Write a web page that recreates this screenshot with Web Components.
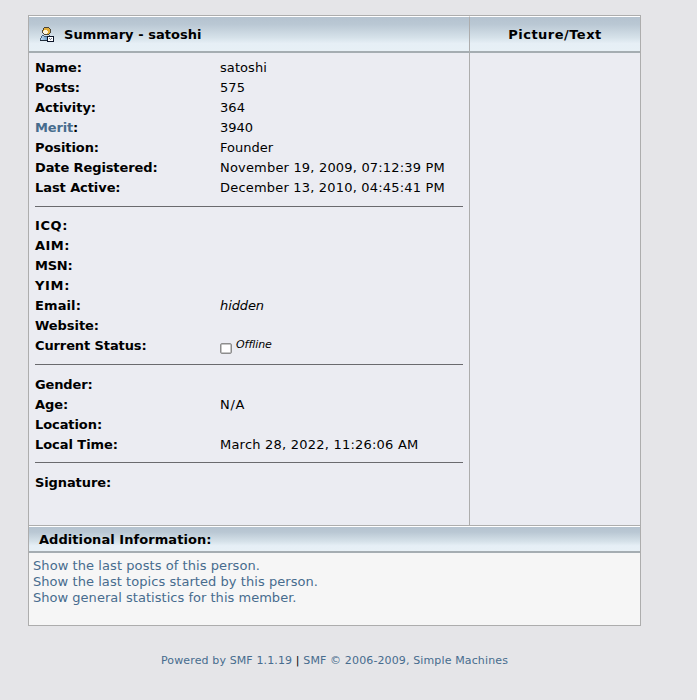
<!DOCTYPE html>
<html lang="en"><head><meta charset="utf-8"><title>Summary - satoshi</title>
<style>
body{margin:0;background:#e5e5e8;color:#000;font:13px/16px Verdana,"DejaVu Sans",sans-serif}
</style></head><body>
<profile-page></profile-page>
<script>
const define=(name,html,init)=>customElements.define(name,class extends HTMLElement{
  connectedCallback(){
    if(this.shadowRoot)return;
    const t=document.createElement('template');
    t.innerHTML=html;
    this.attachShadow({mode:'open'}).append(t.content.cloneNode(true));
    if(init)init(this,this.shadowRoot);
  }
});
// Spreads a run of text over the width given in pixels.
define('fit-text','<style>:host{display:inline-block;white-space:nowrap}</style><slot></slot>',el=>{
  const w=+el.getAttribute('w');
  if(!w)return;
  const n=el.textContent.length;
  el.style.letterSpacing=((w-el.getBoundingClientRect().width)/n)+'px';
});
define('member-icon',`<style>:host{display:block;width:16px;height:16px}svg{display:block}</style>
<svg width="16" height="16" viewBox="0 0 16 16" shape-rendering="crispEdges">
<defs><linearGradient id="b" x2="1"><stop stop-color="#c3dcf0"/><stop offset="1" stop-color="#5f93c4"/></linearGradient></defs>
<path fill="#4a4436" d="M4 0h5v1h1v1h1v4h-1v1h-1v1h-5v-1h-1v-1h-1v-3h1v-2h1z"/>
<path fill="#e3ae38" d="M4 1h5v1h1v4h-1v1h-5v-1h-1v-3h1z"/>
<path fill="#fdf3da" d="M4 3h3v1h1v2h-1v1h-3v-1h-1v-2h1z"/>
<path fill="#44607f" d="M2 8h2v1h5v-1h1v6h-10v-3h1v-2h1z"/>
<path fill="url(#b)" d="M2 9h2v1h4v3h-7v-2h1z"/><path fill="#222e3b" d="M0 13h8v1h-8z"/>
<path fill="#0c1529" d="M7 9h7v6h-7z"/><path fill="#fff" d="M8 10h5v4h-5z"/>
<path fill="#777e91" d="M9 11h1v1h-1zM11 11h1v1h-1zM10 12h1v1h-1z"/></svg>`);
define('title-bar',`<style>:host{display:flex;align-items:center;box-sizing:border-box;font-weight:bold;padding-top:2px;
border-top:1px solid #fff;border-bottom:2px solid #a5adb2;background:linear-gradient(#b4c2cf 0,#bac8d4 22%,#d5e1e9 60%,#e6eff6 78%,#e7f0f6)}</style><slot></slot>`);
define('info-row',`<style>:host{display:grid;grid-template-columns:185px 1fr;height:20px;line-height:20px}
.l{font-weight:bold}</style><span class="l"><slot name="label"></slot></span><span><slot></slot></span>`);
define('rule-line','<style>:host{display:block;height:1px;background:#6a6a6e}</style>');
define('text-link','<style>:host{color:#476c8e}</style><slot></slot>');
define('status-box',`<style>:host{display:flex;align-items:flex-start;font-size:11px;font-style:italic;line-height:18px}
i{box-sizing:border-box;width:12px;height:11px;border:1px solid #8d8d8d;border-radius:2px;background:#fff;box-shadow:inset 0 0 0 .5px #8d8d8d;margin:7px 4px 0 0}</style><i></i><slot></slot>`);
const row=(l,lw,v='',vw=0)=>`<info-row><fit-text slot="label" w="${lw}">${l}</fit-text>${v?(vw?`<fit-text w="${vw}">${v}</fit-text>`:v):''}</info-row>`;
define('profile-page',`<style>
:host{display:block;padding:15px 0 0 28px}
.card{box-sizing:border-box;width:613px;height:611px;border:1px solid #adadad;display:grid;grid-template-columns:440px 1fr;grid-template-rows:37px 472px 28px 1fr}
.left{background:#ebecf2;padding:5px 6px}
rule-line{margin:8px 0 9px}
rule-line.b{margin-bottom:10px}
rule-line.c{margin:7px 0 10px}
.pic{background:#ebecf2;border-left:1px solid #adadad}
.h1{padding-left:11px;gap:8px}
.h2{justify-content:center;border-left:1px solid #adadad}
.add{grid-column:1/3;border-top:1px solid #adadad;display:grid}
.add title-bar{padding-left:10px}
.links{grid-column:1/3;background:#f6f6f6;padding:5px 4px;display:flex;flex-direction:column;align-items:flex-start}
.foot{width:613px;text-align:center;margin-top:27px;font-size:11px;line-height:16px}
text-link{display:block}.foot text-link{display:inline}
info-row text-link{display:inline}
</style>
<div class="card">
<title-bar class="h1"><member-icon></member-icon><fit-text w="137.5">Summary - satoshi</fit-text></title-bar>
<title-bar class="h2"><fit-text w="93.5">Picture/Text</fit-text></title-bar>
<div class="left">
${row('Name:',47,'satoshi',47)}${row('Posts:',45,'575',25)}${row('Activity:',61,'364',25)}
<info-row><fit-text slot="label" w="43"><text-link>Merit</text-link>:</fit-text><fit-text w="33">3940</fit-text></info-row>
${row('Position:',64,'Founder',53)}${row('Date Registered:',122.5,'November 19, 2009, 07:12:39 PM',225)}${row('Last Active:',85.5,'December 13, 2010, 04:45:41 PM',225)}
<rule-line></rule-line>
${row('ICQ:',33)}${row('AIM:',35)}${row('MSN:',37.5)}${row('YIM:',35)}${row('Email:',46,'<i>hidden</i>',44)}${row('Website:',64)}${row('Current Status:',111.5,'<status-box><fit-text w="36">Offline</fit-text></status-box>')}
<rule-line class="b"></rule-line>
${row('Gender:',57.5)}${row('Age:',33,'N/A',25)}${row('Location:',67)}${row('Local Time:',83,'March 28, 2022, 11:26:06 AM',198.5)}
<rule-line class="c"></rule-line>
${row('Signature:',76)}
</div><div class="pic"></div>
<div class="add"><title-bar><fit-text w="172.5">Additional Information:</fit-text></title-bar></div>
<div class="links"><text-link><fit-text w="227">Show the last posts of this person.</fit-text></text-link><text-link><fit-text w="285">Show the last topics started by this person.</fit-text></text-link><text-link><fit-text w="263.5">Show general statistics for this member.</fit-text></text-link></div>
</div>
<div class="foot"><fit-text w="347"><text-link>Powered by SMF 1.1.19</text-link>&nbsp;| <text-link>SMF © 2006-2009, Simple Machines</text-link></fit-text></div>`);
</script></body></html>
